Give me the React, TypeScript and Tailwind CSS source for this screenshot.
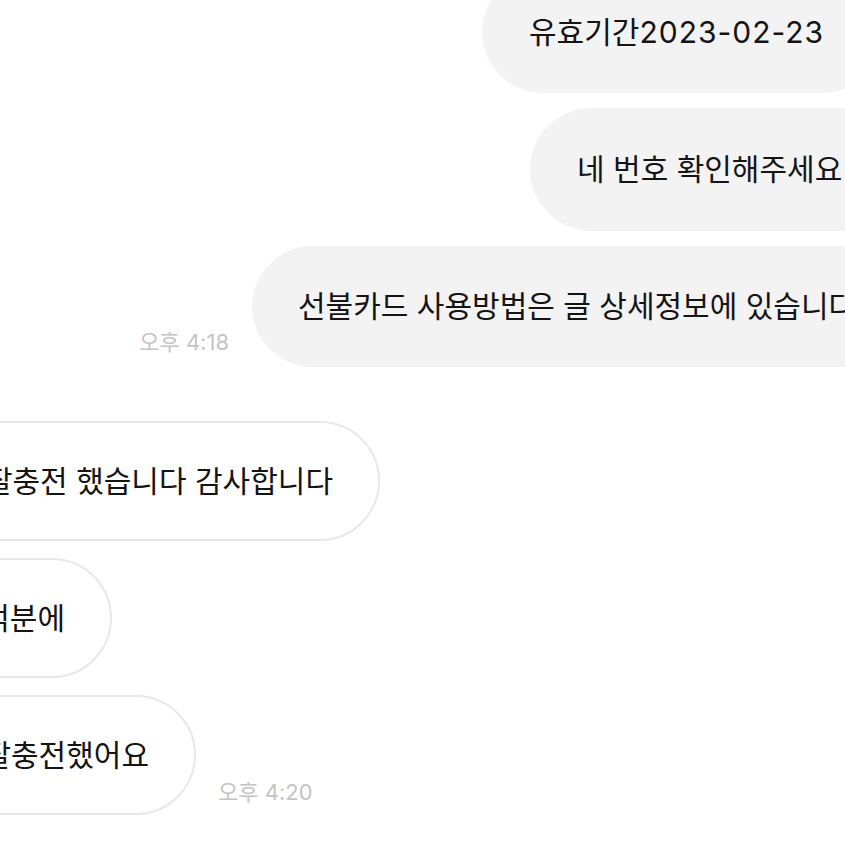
import React from "react";

const font = { fontFamily: '"Inter", "Noto Sans CJK KR", "Noto Sans", sans-serif' };

export default function App() {
  return (
    <div className="w-[845px] h-[845px] overflow-hidden bg-white text-[#141414]" style={font}>
      <div className="flex flex-col mt-[-29px]">
        <div className="flex">
          <div className="ml-[482px] shrink-0 h-[122px] rounded-full bg-[#f3f3f3] pl-[47px] pr-[60px] flex items-center whitespace-nowrap text-[30px]">
            유효기간<span className="tracking-[1px]">2023-02-23</span>
          </div>
        </div>
        <div className="flex mt-[15px]">
          <div className="ml-[530px] shrink-0 h-[123px] rounded-full bg-[#f3f3f3] pl-[47px] pr-[60px] flex items-center whitespace-nowrap text-[30px]">
            네 번호 확인해주세요
          </div>
        </div>
        <div className="flex mt-[15px] items-end">
          <div className="w-[229px] shrink-0 flex justify-end pb-[8px] text-[22px] text-[#c4c4c4] whitespace-nowrap">
            오후 4:18
          </div>
          <div className="ml-[23px] shrink-0 h-[121px] rounded-full bg-[#f3f3f3] pl-[46px] pr-[60px] flex items-center whitespace-nowrap text-[30px]">
            선불카드 사용방법은 글 상세정보에 있습니다
          </div>
        </div>
        <div className="flex mt-[54px] w-[380px] justify-end">
          <div className="shrink-0 h-[120px] rounded-full bg-white border-2 border-[#e8e8e8] pl-[60px] pr-[45px] flex items-center whitespace-nowrap text-[30px]">
            네 잘충전 했습니다 감사합니다
          </div>
        </div>
        <div className="flex mt-[17px] w-[112px] justify-end">
          <div className="shrink-0 h-[120px] rounded-full bg-white border-2 border-[#e8e8e8] pl-[60px] pr-[45px] flex items-center whitespace-nowrap text-[30px]">
            덕분에
          </div>
        </div>
        <div className="flex mt-[17px] items-end">
          <div className="flex w-[196px] shrink-0 justify-end">
            <div className="shrink-0 h-[120px] rounded-full bg-white border-2 border-[#e8e8e8] pl-[60px] pr-[45px] flex items-center whitespace-nowrap text-[30px]">
              잘충전했어요
            </div>
          </div>
          <div className="ml-[22px] pb-[6px] text-[22px] text-[#c4c4c4] whitespace-nowrap">
            오후 4:20
          </div>
        </div>
      </div>
    </div>
  );
}
